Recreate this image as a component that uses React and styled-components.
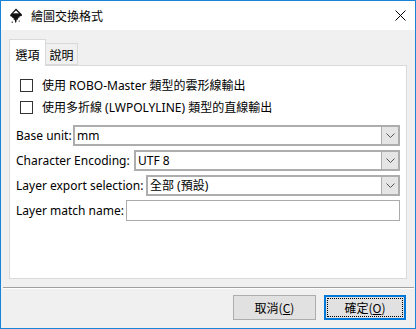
import React from "react";
import styled, { createGlobalStyle } from "styled-components";

const Global = createGlobalStyle`
  html, body { margin: 0; padding: 0; background: #ffffff; }
  body { font-family: "Noto Sans", "Noto Sans CJK TC", sans-serif; font-size: 12px; color: #000; }
  * { box-sizing: border-box; }
`;

const Window = styled.div`
  width: 416px;
  height: 329px;
  border: 1px solid #1883d7;
  background: #f0f0f0;
  display: flex;
  flex-direction: column;
`;

const TitleBar = styled.div`
  height: 29px;
  background: #ffffff;
  display: flex;
  align-items: center;
  padding-left: 7px;
  padding-right: 9px;
  flex-shrink: 0;
`;

const Title = styled.span`
  margin-left: 7px;
  font-family: "Noto Sans CJK TC", sans-serif;
  font-size: 12px;
  flex: 1;
`;

const Close = styled.svg`
  width: 11px;
  height: 11px;
`;

const Body = styled.div`
  flex: 1;
  display: flex;
  flex-direction: column;
  padding: 9px 8px 0 8px;
`;

const Tabs = styled.div`
  display: flex;
  align-items: flex-end;
  height: 26px;
`;

const Tab = styled.div`
  position: relative;
  z-index: 1;
  width: ${(p) => (p.$active ? 37 : 32)}px;
  height: ${(p) => (p.$active ? 27 : 22)}px;
  margin-bottom: ${(p) => (p.$active ? -1 : 0)}px;
  background: ${(p) => (p.$active ? "#ffffff" : "#f0f0f0")};
  border: 1px solid #d9d9d9;
  border-bottom: ${(p) => (p.$active ? "none" : "1px solid #d9d9d9")};
  border-left: ${(p) => (p.$active ? "1px solid #d9d9d9" : "none")};
  display: flex;
  justify-content: center;
  padding-top: ${(p) => (p.$active ? 7 : 3)}px;
  font-family: "Noto Sans CJK TC", sans-serif;
  line-height: 16px;
`;

const Panel = styled.div`
  height: 214px;
  background: #ffffff;
  border: 1px solid #d9d9d9;
  padding: 8px 6px 0 6px;
  display: flex;
  flex-direction: column;
`;

const CheckRow = styled.label`
  height: 22px;
  display: flex;
  align-items: center;
  padding-left: 4px;
`;

const Box = styled.span`
  width: 13px;
  height: 13px;
  border: 1px solid #333333;
  background: #fff;
  flex-shrink: 0;
`;

const CheckText = styled.span`
  margin-left: 9px;
  white-space: nowrap;
`;

const Fields = styled.div`
  margin-top: 7px;
  display: flex;
  flex-direction: column;
  gap: 4px;
`;

const FieldRow = styled.div`
  display: flex;
  align-items: center;
  height: 21px;
`;

const Label = styled.span`
  width: ${(p) => p.$w}px;
  flex-shrink: 0;
  white-space: nowrap;
`;

const Combo = styled.div`
  flex: 1;
  height: 21px;
  border: 2px solid #adadad;
  background: #fff;
  display: flex;
  align-items: stretch;
`;

const ComboText = styled.span`
  flex: 1;
  padding-left: 2px;
  line-height: 17px;
  white-space: nowrap;
`;

const DropBtn = styled.span`
  width: 17px;
  background: #e5e5e5;
  border-left: 1px solid #adadad;
  display: flex;
  align-items: center;
  justify-content: center;
`;

const Entry = styled.div`
  flex: 1;
  height: 21px;
  border: 1px solid #ababab;
  background: #fff;
`;

const Separator = styled.div`
  margin: 8px -7px 0 -6px;
  height: 2px;
  border-top: 1px solid #a0a0a0;
  border-bottom: 1px solid #ffffff;
`;

const ButtonRow = styled.div`
  margin-top: 6px;
  display: flex;
  justify-content: flex-end;
  gap: 8px;
  padding-right: 1px;
`;

const Button = styled.div`
  width: ${(p) => p.$w}px;
  height: 25px;
  background: #e1e1e1;
  border: ${(p) => (p.$default ? "2px solid #0078d7" : "1px solid #adadad")};
  outline: ${(p) => (p.$default ? "1px dotted #000" : "none")};
  outline-offset: -4px;
  display: flex;
  align-items: center;
  justify-content: center;
  font-family: "Noto Sans CJK TC", sans-serif;
  font-size: 12px;
`;

const Chevron = () => (
  <svg width="9" height="5" viewBox="0 0 9 5">
    <path d="M0.5 0.5 L4.5 4.5 L8.5 0.5" fill="none" stroke="#555" strokeWidth="1" />
  </svg>
);

const AppIcon = () => (
  <svg width="16" height="16" viewBox="0 0 16 16">
    <path d="M8 0.5 L13.5 6 C14.5 7 14 8.2 12.8 8.2 L11.5 8.2 C12 9.5 11 10 10.3 9.5 L10 11 C9.8 12 9 12 8.8 11.2 L8.5 13 C8.3 15.2 7.2 15.2 7 13.5 L6.8 11.5 C6.5 12.2 5.6 12 5.6 11 L5.6 9.8 C5 10.3 4 10 4.3 9 L3.2 8.6 C2 8.3 1.8 7.2 2.7 6.3 Z" fill="#111" />
    <path d="M5.2 5.2 C6.5 6 7 4.6 8 5.6 C9 4.6 9.6 6 10.8 5.2 L8 2.6 Z" fill="#fff" />
    <path d="M3.5 14.2 C3.5 13.3 5 13.3 5 14.2 C5 15 3.5 15 3.5 14.2 Z" fill="#111" />
    <path d="M10.5 13 C10.5 12.2 12 12.2 12 13 C12 13.8 10.5 13.8 10.5 13 Z" fill="#111" />
  </svg>
);

export default function App() {
  return (
    <>
      <Global />
      <Window>
        <TitleBar>
          <AppIcon />
          <Title>繪圖交換格式</Title>
          <Close viewBox="0 0 11 11">
            <path d="M0.5 0.5 L10.5 10.5 M10.5 0.5 L0.5 10.5" stroke="#000" strokeWidth="1" />
          </Close>
        </TitleBar>
        <Body>
          <Tabs>
            <Tab $active>選項</Tab>
            <Tab>說明</Tab>
          </Tabs>
          <Panel>
            <CheckRow>
              <Box />
              <CheckText>使用 ROBO-Master 類型的雲形線輸出</CheckText>
            </CheckRow>
            <CheckRow>
              <Box />
              <CheckText>使用多折線 (LWPOLYLINE) 類型的直線輸出</CheckText>
            </CheckRow>
            <Fields>
              <FieldRow>
                <Label $w={57}>Base unit:</Label>
                <Combo>
                  <ComboText>mm</ComboText>
                  <DropBtn><Chevron /></DropBtn>
                </Combo>
              </FieldRow>
              <FieldRow>
                <Label $w={118}>Character Encoding:</Label>
                <Combo>
                  <ComboText>UTF 8</ComboText>
                  <DropBtn><Chevron /></DropBtn>
                </Combo>
              </FieldRow>
              <FieldRow>
                <Label $w={130}>Layer export selection:</Label>
                <Combo>
                  <ComboText>全部 (預設)</ComboText>
                  <DropBtn><Chevron /></DropBtn>
                </Combo>
              </FieldRow>
              <FieldRow>
                <Label $w={110}>Layer match name:</Label>
                <Entry />
              </FieldRow>
            </Fields>
          </Panel>
          <Separator />
          <ButtonRow>
            <Button $w={83}>取消(<u>C</u>)</Button>
            <Button $w={82} $default>確定(<u>O</u>)</Button>
          </ButtonRow>
        </Body>
      </Window>
    </>
  );
}
